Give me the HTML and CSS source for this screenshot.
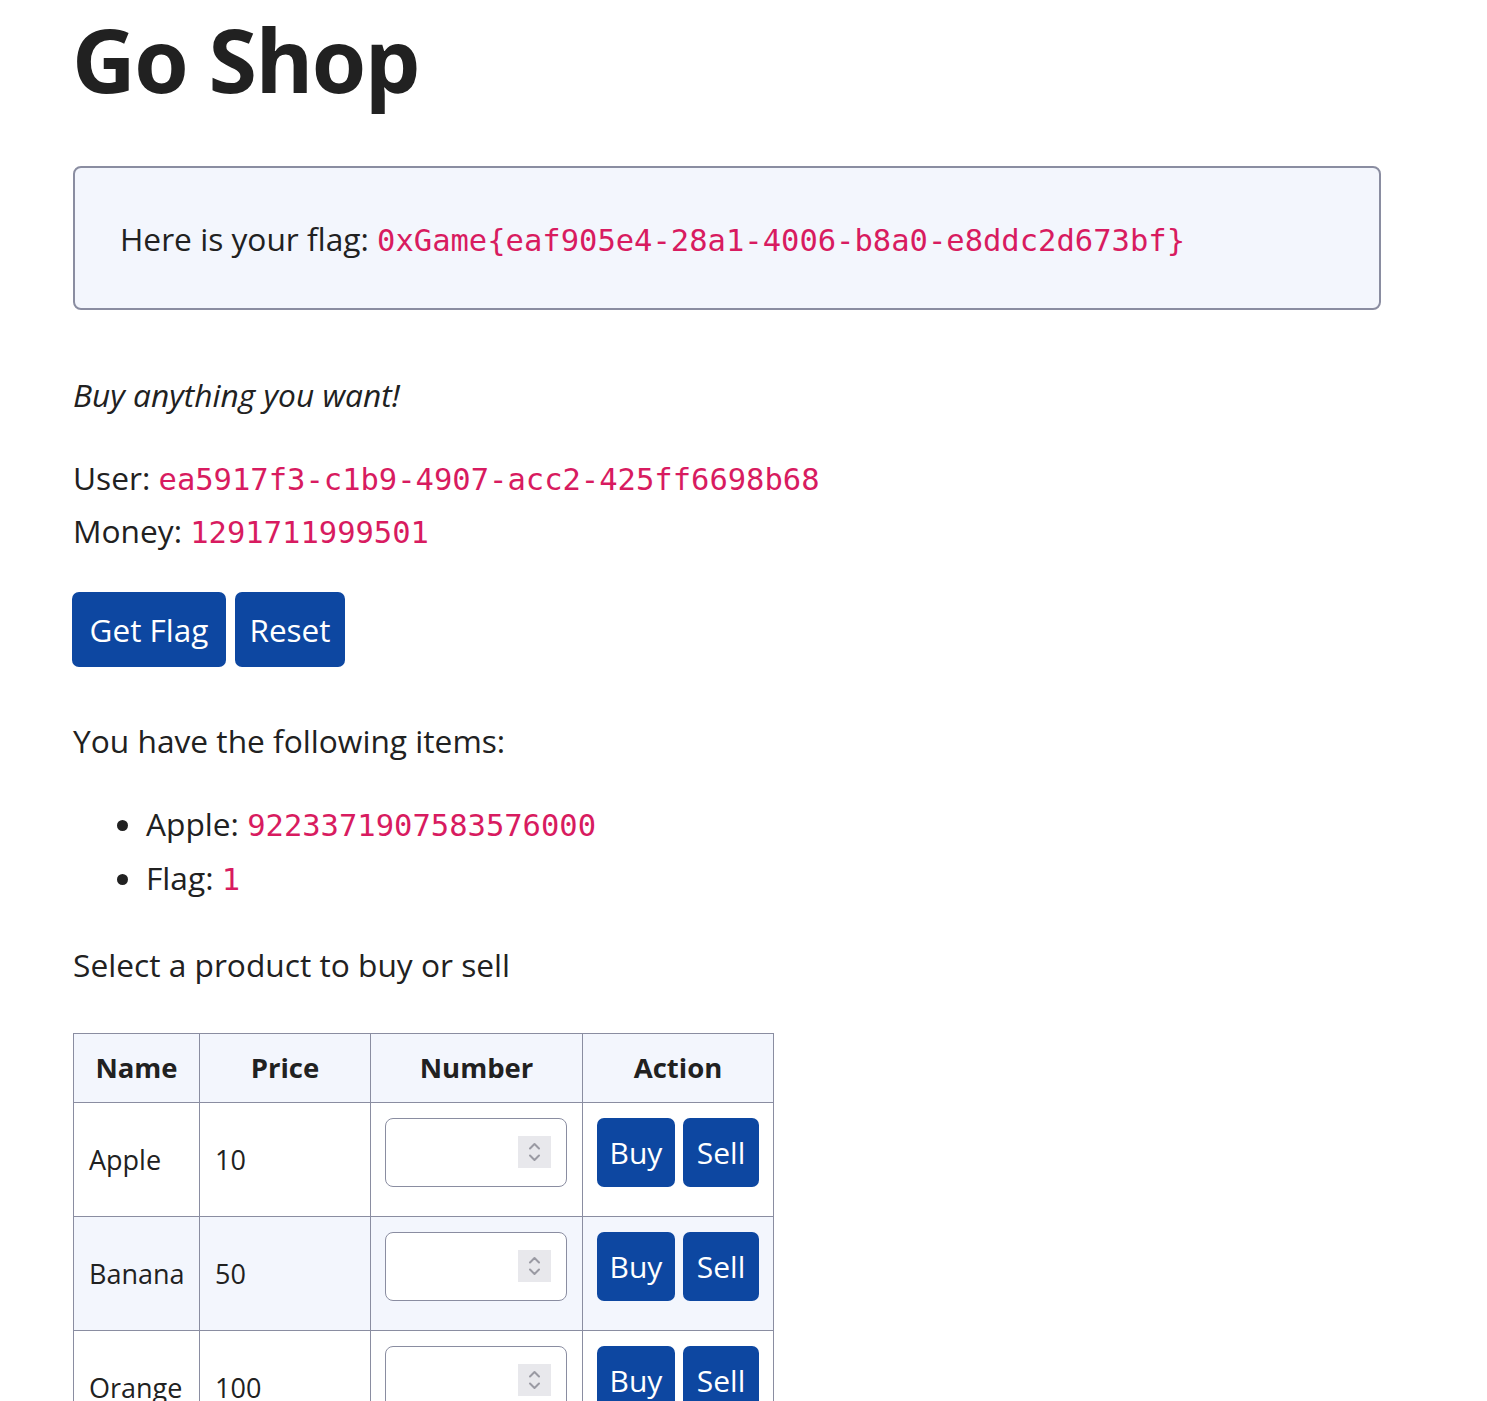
FILE: index.html
```html
<!DOCTYPE html>
<html lang="en">
<head>
<meta charset="utf-8">
<title>Go Shop</title>
<link rel="stylesheet" href="styles.css">
</head>
<body>
<main class="page">
  <h1 class="title">Go Shop</h1>

  <div class="flag-box">
    <p class="flag-text">Here is your flag: <code>0xGame{eaf905e4-28a1-4006-b8a0-e8ddc2d673bf}</code></p>
  </div>

  <p class="tagline">Buy anything you want!</p>

  <div class="info">
    <div class="info-line">User: <code>ea5917f3-c1b9-4907-acc2-425ff6698b68</code></div>
    <div class="info-line">Money: <code>1291711999501</code></div>
  </div>

  <div class="actions">
    <button class="btn btn-lg btn-flag" type="button">Get Flag</button>
    <button class="btn btn-lg btn-reset" type="button">Reset</button>
  </div>

  <p class="items-title">You have the following items:</p>
  <ul class="items">
    <li>Apple: <code>9223371907583576000</code></li>
    <li>Flag: <code>1</code></li>
  </ul>

  <p class="select">Select a product to buy or sell</p>

  <table class="products">
    <colgroup>
      <col class="c-name">
      <col class="c-price">
      <col class="c-number">
      <col class="c-action">
    </colgroup>
    <thead>
      <tr><th>Name</th><th>Price</th><th>Number</th><th>Action</th></tr>
    </thead>
    <tbody>
      <tr>
        <td class="cell-text">Apple</td>
        <td class="cell-text">10</td>
        <td class="cell-ctrl"><span class="num"><input class="num-input" type="text" aria-label="Number"><span class="spin"><svg viewBox="0 0 33 32" width="33" height="32"><path d="M12 12.5 L16.5 8 L21 12.5 M12 19.5 L16.5 24 L21 19.5" fill="none" stroke="#9a9aa3" stroke-width="2" stroke-linecap="round" stroke-linejoin="round"/></svg></span></span></td>
        <td class="cell-ctrl"><div class="row-actions"><button class="btn btn-sm btn-buy" type="button">Buy</button><button class="btn btn-sm btn-sell" type="button">Sell</button></div></td>
      </tr>
      <tr>
        <td class="cell-text">Banana</td>
        <td class="cell-text">50</td>
        <td class="cell-ctrl"><span class="num"><input class="num-input" type="text" aria-label="Number"><span class="spin"><svg viewBox="0 0 33 32" width="33" height="32"><path d="M12 12.5 L16.5 8 L21 12.5 M12 19.5 L16.5 24 L21 19.5" fill="none" stroke="#9a9aa3" stroke-width="2" stroke-linecap="round" stroke-linejoin="round"/></svg></span></span></td>
        <td class="cell-ctrl"><div class="row-actions"><button class="btn btn-sm btn-buy" type="button">Buy</button><button class="btn btn-sm btn-sell" type="button">Sell</button></div></td>
      </tr>
      <tr>
        <td class="cell-text">Orange</td>
        <td class="cell-text">100</td>
        <td class="cell-ctrl"><span class="num"><input class="num-input" type="text" aria-label="Number"><span class="spin"><svg viewBox="0 0 33 32" width="33" height="32"><path d="M12 12.5 L16.5 8 L21 12.5 M12 19.5 L16.5 24 L21 19.5" fill="none" stroke="#9a9aa3" stroke-width="2" stroke-linecap="round" stroke-linejoin="round"/></svg></span></span></td>
        <td class="cell-ctrl"><div class="row-actions"><button class="btn btn-sm btn-buy" type="button">Buy</button><button class="btn btn-sm btn-sell" type="button">Sell</button></div></td>
      </tr>
    </tbody>
  </table>
</main>
</body>
</html>
```

FILE: styles.css
```css
html, body {
  margin: 0;
  padding: 0;
  background: #ffffff;
}

body {
  font-family: "Open Sans", "Noto Sans", sans-serif;
  font-size: 31.7px;
  line-height: 53px;
  color: #212121;
}

.page {
  margin-left: 73px;
  width: 1308px;
  padding-bottom: 80px;
}

code {
  font-family: "DejaVu Sans Mono", "Liberation Mono", monospace;
  font-size: 30.5px;
  line-height: 1;
  color: #d81b60;
}

.title {
  margin: 6px 0 54px -1px;
  font-size: 88px;
  line-height: 106px;
  font-weight: 700;
  letter-spacing: -1.5px;
  color: #212121;
}

.flag-box {
  box-sizing: border-box;
  height: 144px;
  display: flex;
  align-items: center;
  padding: 0 40px 0 45px;
  background: #f3f6fd;
  border: 2px solid #8a8da1;
  border-radius: 8px;
}

.flag-text {
  margin: 0;
}

.tagline {
  margin: 58px 0 0 0;
  font-style: italic;
}

.info {
  margin-top: 30px;
}

.actions {
  margin-top: 35px;
  margin-left: -1px;
  display: flex;
  gap: 9px;
}

.btn {
  font-family: "Open Sans", "Noto Sans", sans-serif;
  color: #ffffff;
  background: #0d47a1;
  border: none;
  border-radius: 7px;
  cursor: pointer;
}

.btn-lg {
  height: 75px;
  padding: 0;
  font-size: 31.5px;
  line-height: 75px;
  text-align: center;
}

.btn-flag { width: 154px; }
.btn-reset { width: 110px; }

.items-title {
  margin: 47px 0 0 0;
}

.items {
  margin: 30px 0 0 0;
  padding-left: 73px;
}

.items li {
  line-height: 54px;
}

.select {
  margin: 33px 0 0 0;
}

.products {
  margin-top: 42px;
  border-collapse: collapse;
  width: 700px;
  table-layout: fixed;
  font-size: 27px;
}

.c-name { width: 126px; }
.c-price { width: 171px; }
.c-number { width: 212px; }
.c-action { width: 191px; }

.products th,
.products td {
  border: 1px solid #8a8da1;
}

.products thead tr {
  background: #f3f6fd;
}

.products th {
  padding: 14px 8px;
  line-height: 40px;
  font-weight: 700;
  font-size: 27.5px;
  text-align: center;
}

.products tbody tr:nth-child(even) {
  background: #f3f6fd;
}

.products tbody tr:nth-child(odd) {
  background: #ffffff;
}

.cell-text {
  padding: 0 10px 0 15px;
  vertical-align: middle;
  white-space: nowrap;
}

.cell-ctrl {
  padding: 15px 14px 29px 14px;
  vertical-align: top;
}

.num {
  position: relative;
  display: block;
  width: 182px;
  height: 69px;
}

.num-input {
  box-sizing: border-box;
  display: block;
  width: 182px;
  height: 69px;
  margin: 0;
  padding: 0 16px;
  border: 1px solid #8a8da1;
  border-radius: 8px;
  background: #ffffff;
  font-family: "Open Sans", "Noto Sans", sans-serif;
  font-size: 27px;
}

.spin {
  position: absolute;
  right: 16px;
  top: 18px;
  width: 33px;
  height: 32px;
  background: #e8e8ec;
  display: block;
}

.spin svg {
  display: block;
}

.row-actions {
  display: flex;
  gap: 8px;
}

.btn-sm {
  height: 69px;
  padding: 0;
  font-size: 30px;
  line-height: 69px;
}

.btn-buy { width: 78px; }
.btn-sell { width: 76px; }
```
